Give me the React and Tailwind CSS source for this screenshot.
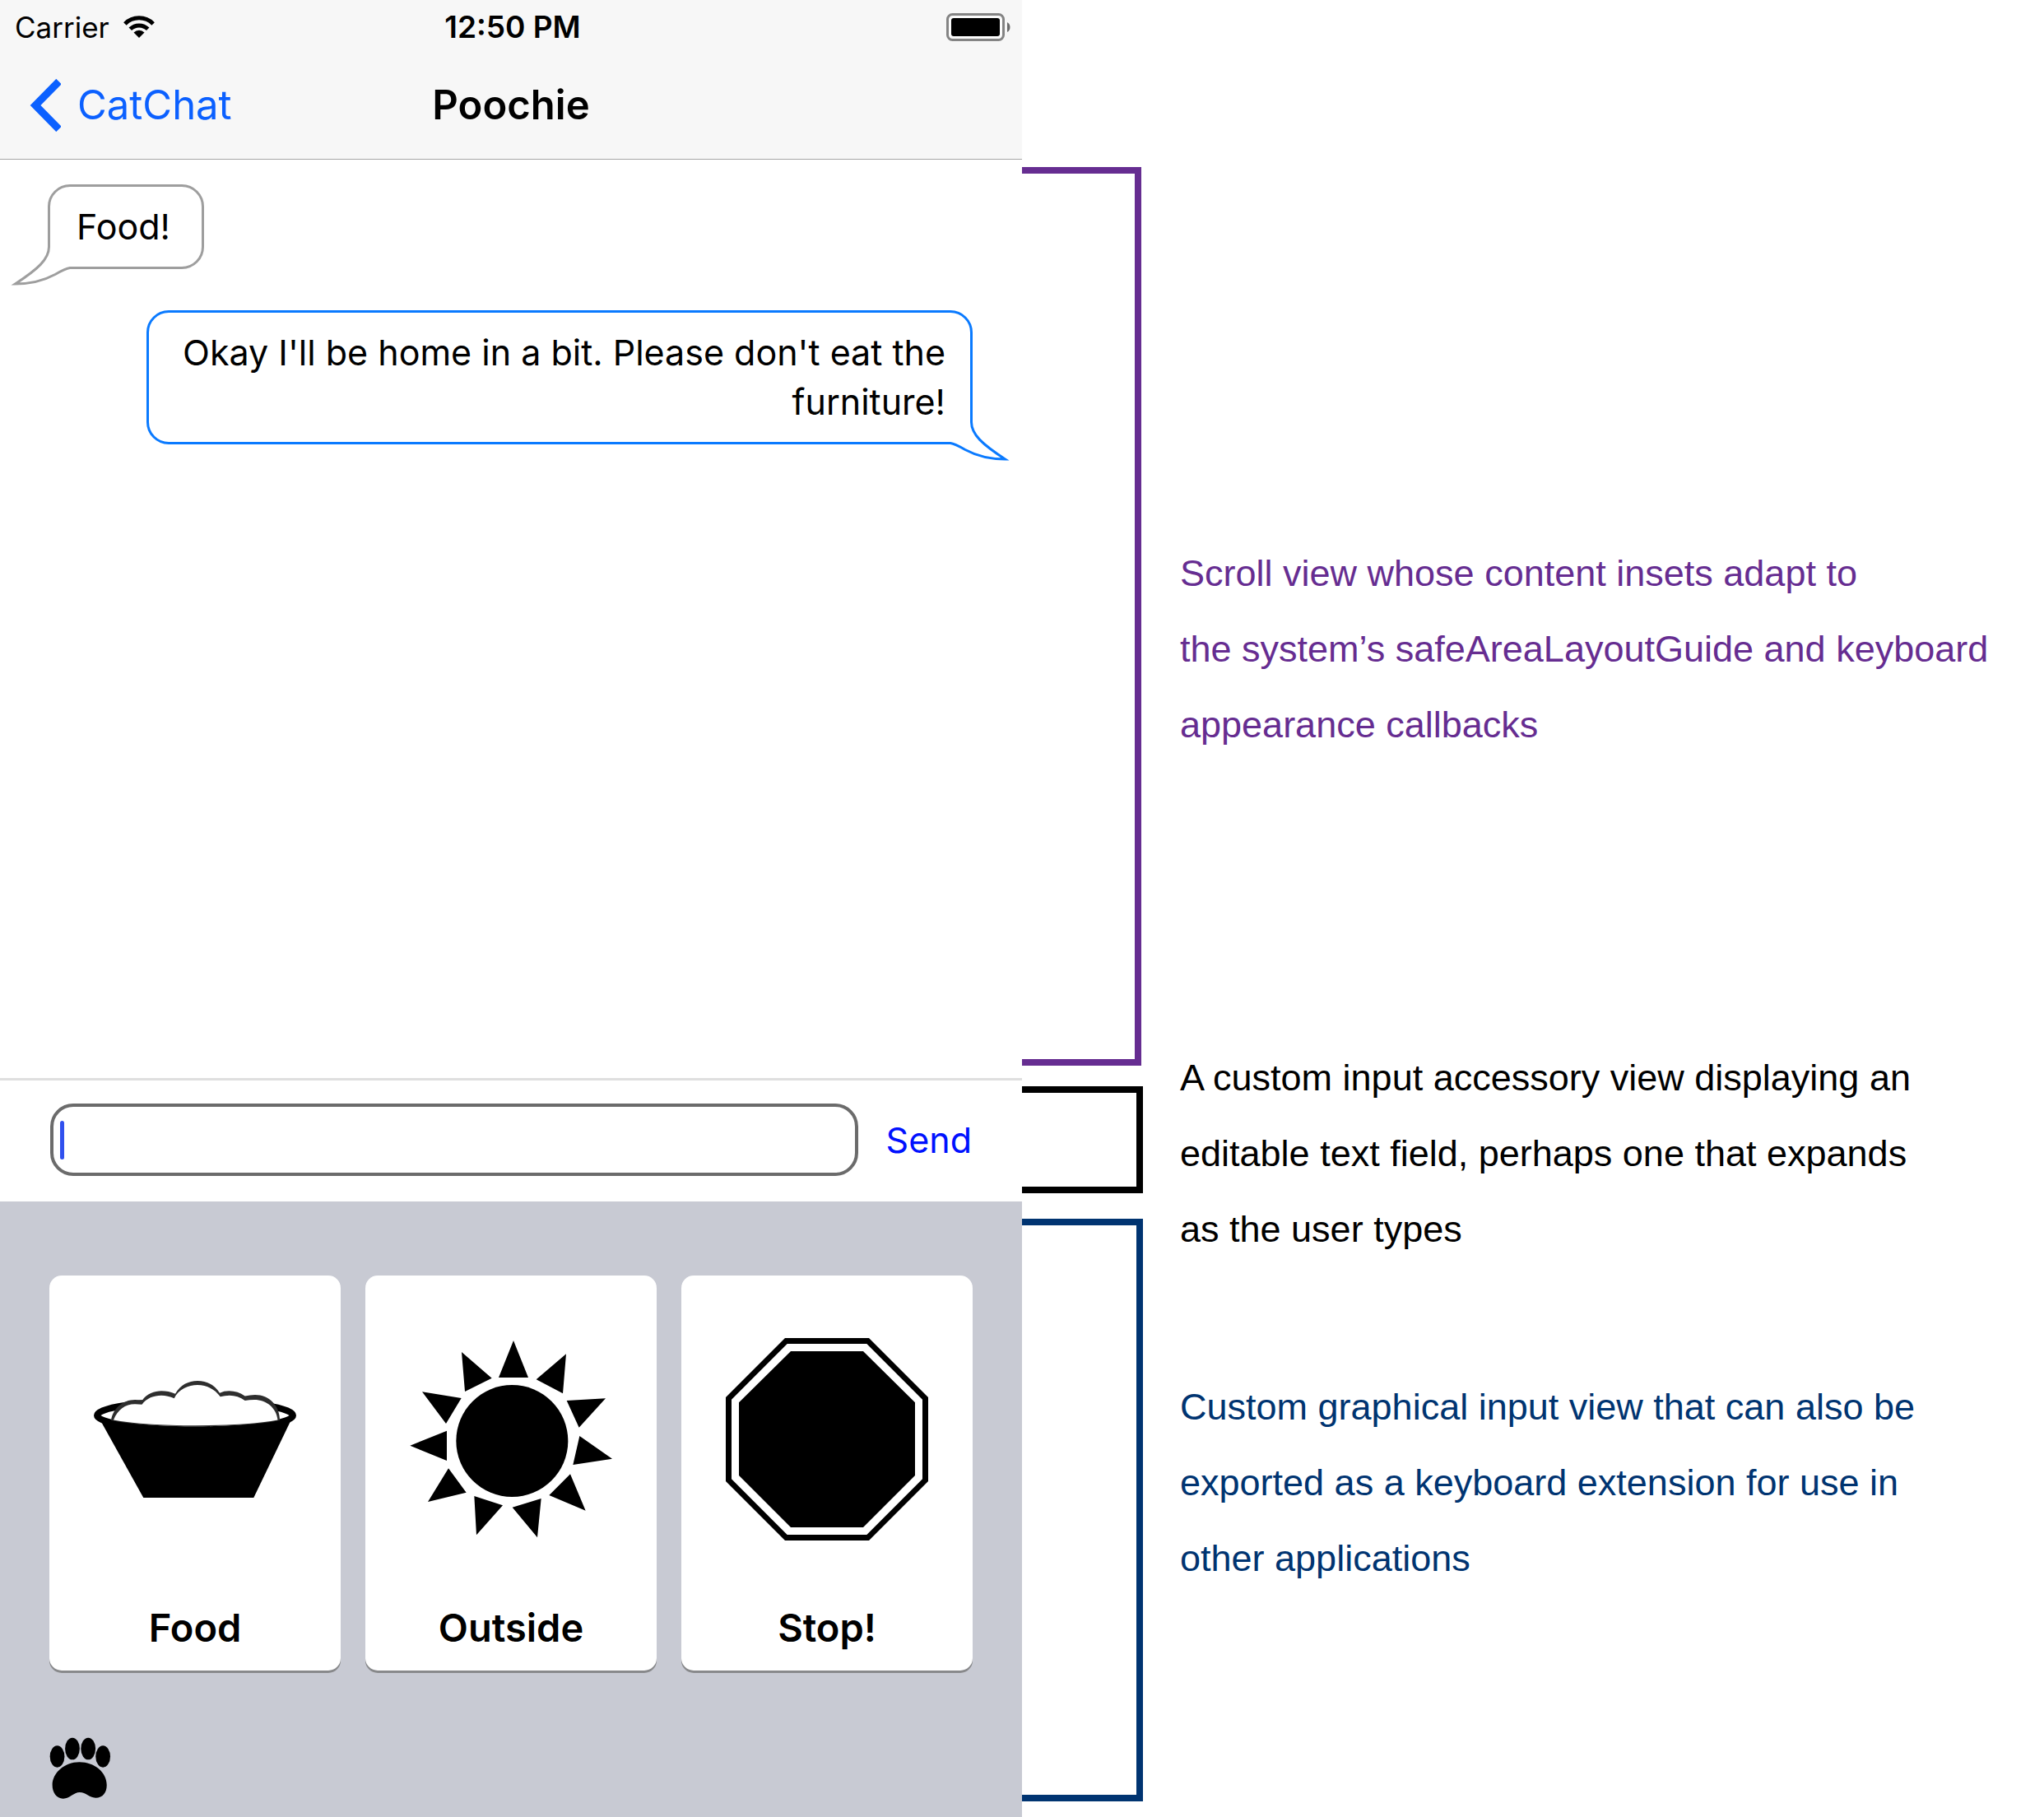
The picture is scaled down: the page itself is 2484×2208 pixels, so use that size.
import React from "react";

function WifiIcon() {
  return (
    <svg viewBox="0 0 39 28" className="h-7 w-10" fill="none" stroke="black" strokeWidth="5" aria-hidden="true">
      <path d="M2.4 9.9A24.2 24.2 0 0 1 36.6 9.9" />
      <path d="M8.8 16.3A15.2 15.2 0 0 1 30.2 16.3" />
      <path d="M19.5 27L13 20.5A9.2 9.2 0 0 1 26 20.5Z" fill="black" stroke="none" />
    </svg>
  );
}

function BatteryIcon() {
  return (
    <svg viewBox="0 0 78 34" className="h-[34px] w-[78px]" role="img" aria-label="Battery full">
      <rect x="1.5" y="1.5" width="68" height="31" rx="6" fill="#fbfbfb" stroke="#848484" strokeWidth="3" />
      <rect x="6" y="6" width="59" height="22" rx="3" />
      <path d="M74 11Q77.500 13 77.500 17T74 23Z" fill="#6b6b6b" />
    </svg>
  );
}

function BubbleTail({ color, side }) {
  return (
    <svg
      viewBox="0 0 80 54"
      className={
        side === "left"
          ? "absolute -bottom-[27px] -left-[51px] h-[54px] w-20"
          : "absolute -right-[51px] -bottom-[27px] h-[54px] w-20"
      }
      aria-hidden="true"
    >
      <g transform={side === "left" ? undefined : "translate(80 0) scale(-1 1)"}>
        <path d="M49.500 0V3C49.500 18 36 30 8.500 48C30 48 44 43.500 57 36.500Q70 29 75 28.500H80V0Z" fill="white" />
        <path
          d="M49.500 0V3C49.500 18 36 30 8.500 48C30 48 44 43.500 57 36.500Q70 29 75 28.500H80"
          fill="none"
          stroke={color}
          strokeWidth="3"
          strokeMiterlimit="10"
        />
      </g>
    </svg>
  );
}

function FoodIcon() {
  return (
    <svg viewBox="0 0 246 246" className="size-[246px]" aria-hidden="true">
      <path d="M8 100L60.300 194H194.300L239.500 100Z" />
      <ellipse cx="123" cy="94" rx="119" ry="17.300" fill="white" stroke="black" strokeWidth="8" />
      <path
        d="M21 100C23 86 35 75 50 75Q55 75 59 75.500C64 68 74 64.300 82 64.300Q91 64.300 99 67.700C105 57 115 52 126 52C137 52 147 57 153 66.700Q158 64.300 164.500 64.300Q175 64.300 183.700 70.500Q190 69 196 69C213 69 226 82 226 100A115 13.300 0 0 1 21 100Z"
        fill="#2e2e2e"
      />
      <path
        d="M24 99.500C29 87 38 80.500 50 80.300L58.500 80.700C64 73 73 69.700 82 69.700Q90 69.700 97.700 73.300C103 62 115 57 126 57C138 57 148 63 153.700 71.300Q159 69.700 165 69.700Q175 69.700 183.700 76Q189 75 195 75C210 75 222 85 223.500 99.500A115 13.300 0 0 1 24 99.500Z"
        fill="white"
      />
    </svg>
  );
}

function SunIcon() {
  return (
    <svg viewBox="204 288 738 738" className="size-[246px]" aria-hidden="true">
      <circle cx="577" cy="663" r="204" />
      <path d="M582 297L636 432H528ZM774 346L762 490L665 439ZM918 508L821 614L776 516ZM942 728L799 750L823 645ZM845 917L712 861L789 784ZM669 1015L578 905L683 873ZM447 1006L439 864L543 898ZM270 885L345 763L410 851ZM205 680L339 626V735ZM249 484L392 507L336 600ZM393 339L503 434L405 483Z" />
    </svg>
  );
}

function StopIcon() {
  return (
    <svg viewBox="216 288 738 738" className="size-[246px]" aria-hidden="true">
      <path
        fillRule="evenodd"
        d="M432 288H738L954 504V810L738 1026H432L216 810V504ZM440 309L237 512V802L440 1005H730L933 802V512L730 309Z"
      />
      <path d="M453 336H717L906 523V789L717 978H453L264 789V523Z" />
    </svg>
  );
}

function PawIcon() {
  return (
    <svg viewBox="180 211 226 228" className="size-[75px]" aria-hidden="true">
      <ellipse cx="208" cy="282.500" rx="27" ry="40" />
      <ellipse cx="264" cy="253.500" rx="27" ry="40.500" />
      <ellipse cx="322.500" cy="253.500" rx="27" ry="40.500" />
      <ellipse cx="377" cy="282.500" rx="27" ry="40" />
      <path d="M290 303C345 303 391 340 391 388C391 415 377 435 350 435C325 435 315 415 291 415C268 415 255 438 230 438C205 438 190 415 190 388C190 343 235 303 290 303Z" />
    </svg>
  );
}

const keys = [
  { label: "Food", Icon: FoodIcon },
  { label: "Outside", Icon: SunIcon },
  { label: "Stop!", Icon: StopIcon },
];

function Phone() {
  return (
    <main className="flex min-h-screen flex-col font-['Inter','Liberation_Sans',sans-serif] text-[43px] leading-[60px]">
      <header className="border-b border-[#a5a5a5] bg-[#f7f7f7] pt-[13px] pb-[33px]">
        <div className="grid h-10 grid-cols-[1fr_auto_1fr] items-center pr-3.5 pl-[18px] text-[35px] leading-10">
          <div className="flex items-center gap-4">
            <span>Carrier</span>
            <WifiIcon />
          </div>
          <time className="text-[37px] font-semibold">12:50 PM</time>
          <div className="flex justify-end">
            <BatteryIcon />
          </div>
        </div>
        <div className="mt-[43px] grid grid-cols-[1fr_auto_1fr] items-center px-9 text-[49px] leading-[60px]">
          <a href="#chats" className="flex items-center gap-5 text-[#0b60ff]">
            <svg viewBox="0 0 38 64" className="h-16 w-[38px]" fill="none" stroke="currentColor" strokeWidth="9" aria-hidden="true">
              <path d="M35.500 3L7 32L35.500 61" />
            </svg>
            CatChat
          </a>
          <h1 className="font-semibold">Poochie</h1>
        </div>
      </header>

      <section className="flex grow flex-col gap-[50px] pt-[30px] pr-[60px] pl-[58px]">
        <div className="relative self-start rounded-[27px] border-3 border-[#9e9e9e] pt-[18px] pr-[38px] pb-[19px] pl-8">
          <BubbleTail color="#9e9e9e" side="left" />
          <p className="relative">Food!</p>
        </div>
        <div className="relative ml-[120px] rounded-[27px] border-3 border-[#0a7aff] pt-[18px] pr-[30px] pb-[19px] pl-5 text-right">
          <BubbleTail color="#0a7aff" side="right" />
          <p className="relative">
            Okay I'll be home in a bit. Please don't eat the
            <br />
            furniture!
          </p>
        </div>
      </section>

      <form
        className="flex items-center gap-[34px] border-t-3 border-[#dfdfdf] px-[61px] pt-7 pb-[31px]"
        onSubmit={(e) => e.preventDefault()}
      >
        <label className="flex h-[88px] grow items-center rounded-[28px] border-4 border-[#6b6b6b] px-2">
          <span className="h-[47px] w-[5px] rounded-sm bg-[#3050ee]" />
          <input type="text" aria-label="Message" className="w-full min-w-0 bg-transparent caret-transparent outline-none" />
        </label>
        <button type="submit" className="text-[#0011ff]">
          Send
        </button>
      </form>

      <section className="bg-[#c8cad3] px-[60px] pt-[90px] pb-[22px]">
        <div className="grid grid-cols-3 gap-[30px]">
          {keys.map(({ label, Icon }) => (
            <button
              key={label}
              type="button"
              className="flex flex-col items-center rounded-[15px] bg-white pt-[76px] pb-[22px] text-[47px] leading-[60px] font-semibold shadow-[0_3px_0_#88898b]"
            >
              <Icon />
              <span className="mt-[76px]">{label}</span>
            </button>
          ))}
        </div>
        <button type="button" aria-label="Switch keyboard" className="mt-[81px] block">
          <PawIcon />
        </button>
      </section>
    </main>
  );
}

function Annotations() {
  return (
    <aside className="flex gap-[45px] font-['Liberation_Sans',Arial,sans-serif] text-[45px] leading-[92px]">
      <div className="w-[147px] shrink-0 pt-[203px]" aria-hidden="true">
        <div className="mr-0.5 h-[1092px] border-8 border-l-0 border-[#662d91]" />
        <div className="mt-[25px] h-[130px] border-8 border-l-0 border-black" />
        <div className="mt-[31px] h-[708px] border-8 border-l-0 border-[#003471]" />
      </div>
      <div className="pt-[651px] whitespace-nowrap">
        <p className="text-[#662d91]">
          Scroll view whose content insets adapt to
          <br />
          the system’s safeAreaLayoutGuide and keyboard
          <br />
          appearance callbacks
        </p>
        <p className="mt-[337px] text-black">
          A custom input accessory view displaying an
          <br />
          editable text field, perhaps one that expands
          <br />
          as the user types
        </p>
        <p className="mt-[124px] text-[#003471]">
          Custom graphical input view that can also be
          <br />
          exported as a keyboard extension for use in
          <br />
          other applications
        </p>
      </div>
    </aside>
  );
}

export default function App() {
  return (
    <div className="grid min-h-screen grid-cols-2 bg-white text-black">
      <Phone />
      <Annotations />
    </div>
  );
}
